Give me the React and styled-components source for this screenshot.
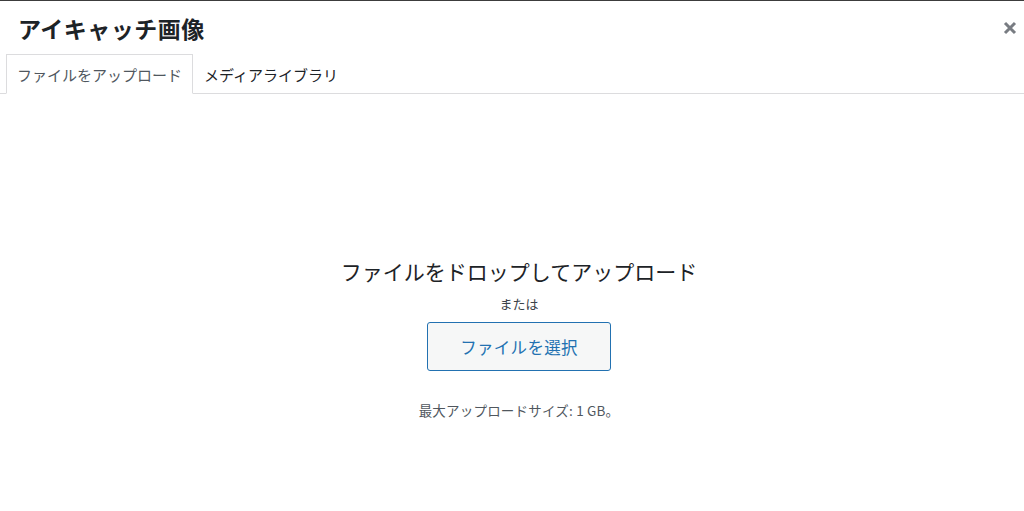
import React from 'react';
import styled, { createGlobalStyle } from 'styled-components';

const GlobalStyle = createGlobalStyle`
  html, body {
    margin: 0;
    padding: 0;
    background: #fff;
  }
  body {
    font-family: "Noto Sans CJK JP", "Noto Sans", sans-serif;
    color: #1d2327;
  }
`;

const Modal = styled.div`
  width: 1024px;
  height: 511px;
  display: flex;
  flex-direction: column;
  background: #fff;
  border-top: 1px solid #3c3c3c;
  box-sizing: border-box;
  overflow: hidden;
`;

const Header = styled.div`
  display: flex;
  align-items: center;
  justify-content: space-between;
  height: 53px;
  padding: 0 0 0 18px;
`;

const Title = styled.h1`
  margin: 0;
  font-size: 23px;
  font-weight: 700;
  color: #1d2327;
  letter-spacing: 0.5px;
`;

const CloseButton = styled.button`
  width: 28px;
  height: 28px;
  border: none;
  background: none;
  padding: 0;
  display: flex;
  align-items: center;
  justify-content: center;
  cursor: pointer;
`;

const Tabs = styled.div`
  display: flex;
  align-items: flex-end;
  padding-left: 6px;
  border-bottom: 1px solid #dcdcde;
  height: 39px;
`;

const Tab = styled.div`
  box-sizing: border-box;
  padding: 0 10px;
  display: flex;
  align-items: center;
  font-size: 15px;
  color: ${(p) => (p.active ? '#50575e' : '#1d2327')};
  background: ${(p) => (p.active ? '#fff' : 'transparent')};
  border: 1px solid ${(p) => (p.active ? '#dcdcde' : 'transparent')};
  border-bottom: ${(p) => (p.active ? '1px solid #fff' : 'none')};
  margin-bottom: ${(p) => (p.active ? '-1px' : '0')};
  height: ${(p) => (p.active ? '40px' : '39px')};
`;

const Body = styled.div`
  flex: 1;
  display: flex;
  flex-direction: column;
  align-items: center;
  padding: 162px 0 0 14px;
  background: #fff;
`;

const DropText = styled.h2`
  margin: 0;
  font-size: 21px;
  font-weight: 400;
  color: #1d2327;
  line-height: 30px;
`;

const OrText = styled.p`
  margin: 8px 0 0;
  font-size: 13px;
  color: #3c434a;
  line-height: 20px;
`;

const SelectButton = styled.button`
  margin-top: 8px;
  width: 184px;
  height: 49px;
  border: 1px solid #2271b1;
  border-radius: 3px;
  background: #f6f7f7;
  color: #2271b1;
  font-family: inherit;
  font-size: 16.5px;
  letter-spacing: 0.3px;
  cursor: pointer;
`;

const MaxSize = styled.p`
  margin: 29px 0 0;
  font-size: 13.5px;
  letter-spacing: 0.2px;
  color: #50575e;
  line-height: 20px;
`;

const App = () => {
  return (
    <>
      <GlobalStyle />
      <Modal>
        <Header>
          <Title>アイキャッチ画像</Title>
          <CloseButton aria-label="閉じる">
            <svg width="14" height="14" viewBox="0 0 14 14">
              <path d="M2 2 L12 12 M12 2 L2 12" stroke="#787c82" strokeWidth="3" strokeLinecap="butt" />
            </svg>
          </CloseButton>
        </Header>
        <Tabs>
          <Tab active>ファイルをアップロード</Tab>
          <Tab>メディアライブラリ</Tab>
        </Tabs>
        <Body>
          <DropText>ファイルをドロップしてアップロード</DropText>
          <OrText>または</OrText>
          <SelectButton>ファイルを選択</SelectButton>
          <MaxSize>最大アップロードサイズ: 1 GB。</MaxSize>
        </Body>
      </Modal>
    </>
  );
};

export default App;
